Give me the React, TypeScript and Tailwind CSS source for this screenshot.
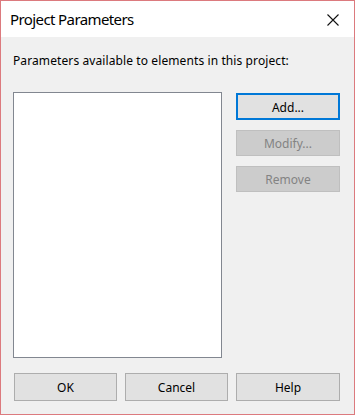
import React from "react";

const font = { fontFamily: '"Segoe UI", "Noto Sans", "Open Sans", sans-serif' };

function Btn({
  children,
  variant = "normal",
  className = "",
}: {
  children: React.ReactNode;
  variant?: "normal" | "default" | "disabled";
  className?: string;
}) {
  const v =
    variant === "default"
      ? "bg-[#e1e1e1] border-2 border-[#0078d7] text-black"
      : variant === "disabled"
      ? "bg-[#cccccc] border border-[#bfbfbf] text-[#838383]"
      : "bg-[#e1e1e1] border border-[#adadad] text-black";
  return (
    <div
      className={`flex items-center justify-center pt-[2px] text-[12px] leading-none ${v} ${className}`}
    >
      {children}
    </div>
  );
}

export default function App() {
  return (
    <div className="w-[355px] h-[416px] bg-white" style={font}>
      <div className="w-[355px] h-[415px] border border-[#dc7a7e] flex flex-col bg-[#f0f0f0]">
        {/* Title bar */}
        <div className="h-[36px] bg-white flex items-center justify-between pl-[9px] pr-[15px] shrink-0">
          <span className="text-[15px] text-black tracking-[-0.6px] mt-[1px]">Project Parameters</span>
          <svg width="12" height="12" viewBox="0 0 12 12" className="mt-[2px]">
            <path d="M0.5 0.5 L11.5 11.5 M11.5 0.5 L0.5 11.5" stroke="#111" strokeWidth="1.1" fill="none" />
          </svg>
        </div>
        {/* Body */}
        <div className="flex flex-col pl-[12px] pr-[14px] flex-1">
          <div className="mt-[16px] h-[16px] leading-[16px] text-[12px] text-black tracking-[0.1px]">
            Parameters available to elements in this project:
          </div>
          <div className="flex mt-[23px]">
            <div className="w-[209px] h-[266px] bg-white border border-[#828790]" />
            <div className="ml-[14px] mt-[1px] flex flex-col gap-[10px]">
              <Btn variant="default" className="w-[104px] h-[27px]">Add...</Btn>
              <Btn variant="disabled" className="w-[104px] h-[26px]">Modify...</Btn>
              <Btn variant="disabled" className="w-[104px] h-[26px]">Remove</Btn>
            </div>
          </div>
          <div className="flex mt-[15px] ml-[1px] gap-[8px]">
            <Btn className="w-[103px] h-[28px]">OK</Btn>
            <Btn className="w-[103px] h-[28px]">Cancel</Btn>
            <Btn className="w-[104px] h-[28px]">Help</Btn>
          </div>
        </div>
      </div>
    </div>
  );
}
